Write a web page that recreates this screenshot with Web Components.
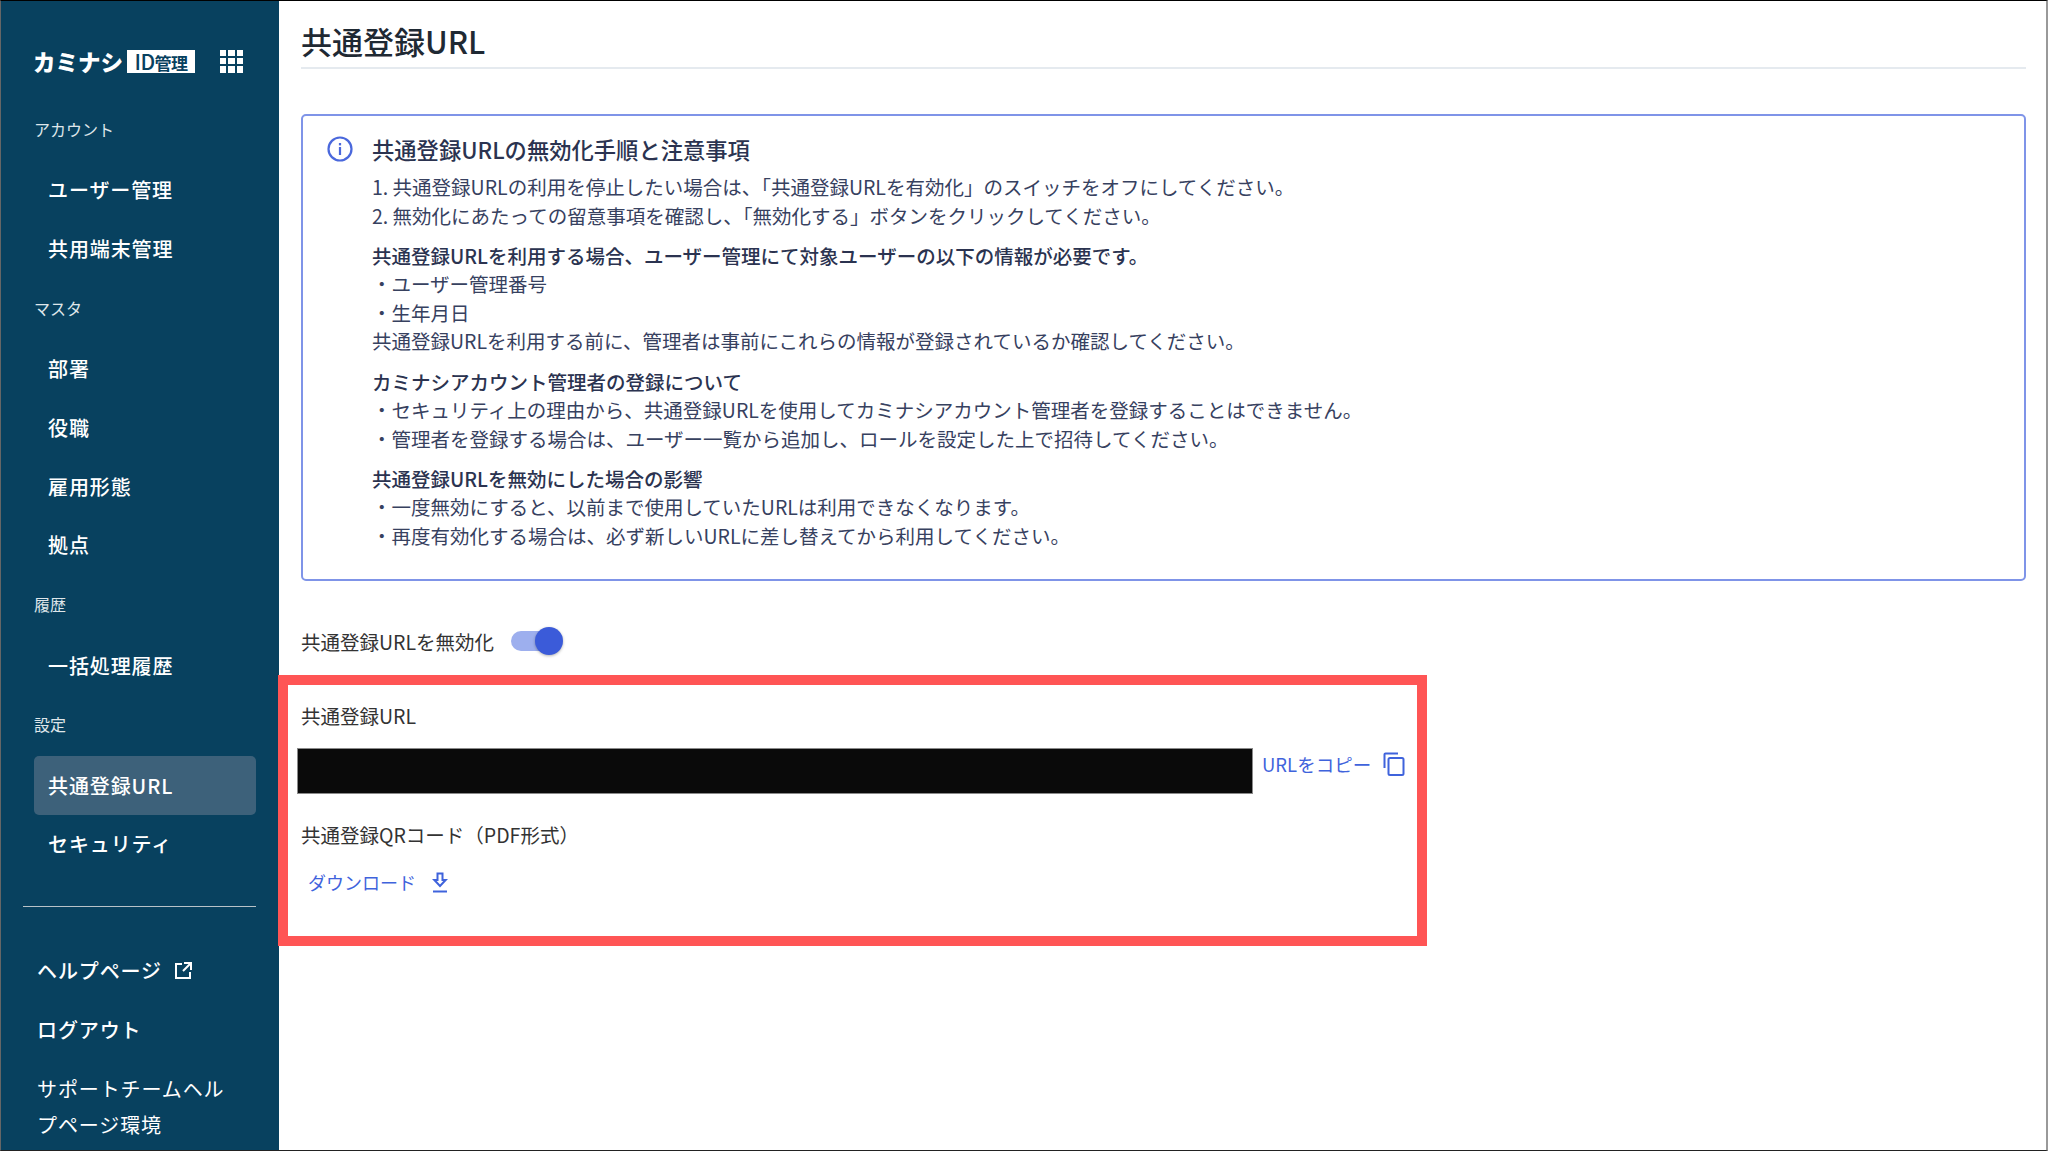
<!DOCTYPE html>
<html lang="ja">
<head>
<meta charset="utf-8">
<title>共通登録URL</title>
<style>
  html, body { margin: 0; padding: 0; }
  body {
    width: 2048px;
    height: 1151px;
    box-sizing: border-box;
    overflow: hidden;
    display: flex;
    background: #fff;
    border-top: 1px solid #000;
    border-bottom: 1px solid #222;
    border-left: 1px solid #666;
    border-right: 2px solid #999;
    font-family: "Noto Sans CJK JP", "Noto Sans", sans-serif;
  }
</style>
</head>
<body>
<side-nav>
  <nav-group label="アカウント">
    <nav-item>ユーザー管理</nav-item>
    <nav-item>共用端末管理</nav-item>
  </nav-group>
  <nav-group label="マスタ">
    <nav-item>部署</nav-item>
    <nav-item>役職</nav-item>
    <nav-item>雇用形態</nav-item>
    <nav-item>拠点</nav-item>
  </nav-group>
  <nav-group label="履歴">
    <nav-item>一括処理履歴</nav-item>
  </nav-group>
  <nav-group label="設定">
    <nav-item active>共通登録URL</nav-item>
    <nav-item>セキュリティ</nav-item>
  </nav-group>
  <side-link slot="footer" external>ヘルプページ</side-link>
  <side-link slot="footer">ログアウト</side-link>
  <side-link slot="footer" light>サポートチームヘルプページ環境</side-link>
</side-nav>
<main-area>
  <page-title>共通登録URL</page-title>
  <notice-box heading="共通登録URLの無効化手順と注意事項">
    <notice-block>
      <div>1. 共通登録URLの利用を停止したい場合は、「共通登録URLを有効化」のスイッチをオフにしてください。</div>
      <div>2. 無効化にあたっての留意事項を確認し、「無効化する」ボタンをクリックしてください。</div>
    </notice-block>
    <notice-block heading="共通登録URLを利用する場合、ユーザー管理にて対象ユーザーの以下の情報が必要です。">
      <div>・ユーザー管理番号</div>
      <div>・生年月日</div>
      <div>共通登録URLを利用する前に、管理者は事前にこれらの情報が登録されているか確認してください。</div>
    </notice-block>
    <notice-block heading="カミナシアカウント管理者の登録について">
      <div>・セキュリティ上の理由から、共通登録URLを使用してカミナシアカウント管理者を登録することはできません。</div>
      <div>・管理者を登録する場合は、ユーザー一覧から追加し、ロールを設定した上で招待してください。</div>
    </notice-block>
    <notice-block heading="共通登録URLを無効にした場合の影響">
      <div>・一度無効にすると、以前まで使用していたURLは利用できなくなります。</div>
      <div>・再度有効化する場合は、必ず新しいURLに差し替えてから利用してください。</div>
    </notice-block>
  </notice-box>
  <toggle-row>共通登録URLを無効化</toggle-row>
  <url-panel></url-panel>
</main-area>
<script>
class SideNav extends HTMLElement {
  constructor() {
    super();
    this.attachShadow({ mode: 'open' });
    this.shadowRoot.innerHTML = `<style>
  :host {
    display: flex;
    flex-direction: column;
    flex: none;
    width: 278px;
    height: 100%;
    background: #08415f;
    color: #fff;
    box-sizing: border-box;
    overflow: hidden;
  }
  .logo {
    display: flex;
    flex: none;
    align-items: center;
    height: 98px;
    padding: 22px 0 0 32px;
    box-sizing: border-box;
  }
  .logo__name {
    font-size: 22.5px;
    font-weight: 900;
    line-height: 24px;
  }
  .logo__badge {
    margin-left: 4px;
    width: 68px;
    height: 23px;
    background: #fff;
    color: #08415f;
    font-size: 17px;
    font-weight: 700;
    line-height: 23px;
    text-align: center;
    letter-spacing: -0.5px;
    white-space: nowrap;
  }
  .logo__badge b { font-size: 21px; font-weight: 500; }
  .logo__grid {
    margin-left: 25px;
    width: 23px;
    height: 23px;
    display: grid;
    grid-template-columns: repeat(3, 1fr);
    gap: 2px;
  }
  .logo__grid span { background: #fff; }
  .groups { display: flex; flex: none; flex-direction: column; }
  .rule {
    flex: none;
    margin: 33px 23px 0 22px;
    border-top: 1px solid #b8c2c8;
    height: 0;
  }
  .footer {
    display: flex;
    flex: none;
    flex-direction: column;
    padding-top: 35px;
  }
</style>
<div class="logo">
  <span class="logo__name">カミナシ</span>
  <span class="logo__badge"><b>ID</b>管理</span>
  <div class="logo__grid"><span></span><span></span><span></span><span></span><span></span><span></span><span></span><span></span><span></span></div>
</div>
<div class="groups"><slot></slot></div>
<div class="rule"></div>
<div class="footer"><slot name="footer"></slot></div>`;
  }
}

class NavGroup extends HTMLElement {
  constructor() {
    super();
    this.attachShadow({ mode: 'open' });
    this.shadowRoot.innerHTML = `<style>
  :host { display: block; }
  .label {
    height: 61.6px;
    box-sizing: border-box;
    padding: 0 0 2px 33px;
    display: flex;
    align-items: center;
    font-size: 16px;
    color: #dfe6ea;
  }
</style>
<div class="label"></div>
<slot></slot>`;
    this.shadowRoot.querySelector('.label').textContent = this.getAttribute('label');
  }
}

class NavItem extends HTMLElement {
  constructor() {
    super();
    this.attachShadow({ mode: 'open' });
    this.shadowRoot.innerHTML = `<style>
  :host {
    display: flex;
    align-items: center;
    height: 58.67px;
    margin: 0 23px 0 33px;
    padding-left: 14px;
    box-sizing: border-box;
    border-radius: 5px;
    font-size: 20px;
    font-weight: 500;
    letter-spacing: 0.9px;
    color: #fff;
  }
  :host([active]) { background: #3d617a; }
</style>
<slot></slot>`;
  }
}

class SideLink extends HTMLElement {
  constructor() {
    super();
    this.attachShadow({ mode: 'open' });
    const icon = this.hasAttribute('external')
      ? `<svg width="20" height="20" viewBox="0 0 20 20" fill="none" stroke="#fff" stroke-width="2"><path d="M9 3H3v14h14v-6"/><path d="M11 2h7v7M18 2l-8 8"/></svg>`
      : '';
    this.shadowRoot.innerHTML = `<style>
  :host {
    display: block;
    margin-left: 36px;
    width: 200px;
    font-size: 20px;
    font-weight: 500;
    letter-spacing: 0.9px;
    line-height: 36px;
    padding: 11px 0 12px;
    color: #fff;
  }
  :host([light]) { font-weight: 400; }
  svg { vertical-align: -2px; margin-left: 11px; }
</style>
<slot></slot>${icon}`;
  }
}

class MainArea extends HTMLElement {
  constructor() {
    super();
    this.attachShadow({ mode: 'open' });
    this.shadowRoot.innerHTML = `<style>
  :host {
    display: flex;
    flex-direction: column;
    flex: 1;
    min-width: 0;
    padding: 0 20px 0 22px;
    position: relative;
    color: #333;
  }
</style>
<slot></slot>`;
  }
}

class PageTitle extends HTMLElement {
  constructor() {
    super();
    this.attachShadow({ mode: 'open' });
    this.shadowRoot.innerHTML = `<style>
  :host {
    display: block;
    height: 68px;
    box-sizing: border-box;
    border-bottom: 2px solid #e5eaef;
    font-size: 31px;
    font-weight: 500;
    line-height: 80px;
    color: #1f2933;
  }
</style>
<slot></slot>`;
  }
}

class NoticeBox extends HTMLElement {
  constructor() {
    super();
    this.attachShadow({ mode: 'open' });
    this.shadowRoot.innerHTML = `<style>
  :host {
    display: block;
    margin-top: 45px;
    height: 467px;
    box-sizing: border-box;
    border: 2px solid #7f94e8;
    border-radius: 5px;
    padding: 18px 24px 0 24px;
    color: #37415f;
  }
  .head {
    display: flex;
    align-items: center;
    gap: 19px;
    height: 30px;
    font-size: 22.3px;
    font-weight: 500;
    color: #2b3350;
  }
  .head svg { flex: none; }
  .body { padding: 9.4px 0 0 45px; }
</style>
<div class="head">
  <svg width="26" height="26" viewBox="0 0 26 26" fill="none"><circle cx="13" cy="13" r="11.5" stroke="#4a68dc" stroke-width="2.2"/><rect x="11.9" y="11" width="2.2" height="8" fill="#4a68dc"/><rect x="11.9" y="7" width="2.2" height="2.4" fill="#4a68dc"/></svg>
  <span class="head__text"></span>
</div>
<div class="body"><slot></slot></div>`;
    this.shadowRoot.querySelector('.head__text').textContent = this.getAttribute('heading');
  }
}

class NoticeBlock extends HTMLElement {
  constructor() {
    super();
    this.attachShadow({ mode: 'open' });
    this.shadowRoot.innerHTML = `<style>
  :host {
    display: block;
    font-size: 19.5px;
    line-height: 28.5px;
    margin-bottom: 11.6px;
  }
  .heading { font-weight: 500; color: #2b3350; }
  .heading:empty { display: none; }
</style>
<div class="heading"></div>
<slot></slot>`;
    this.shadowRoot.querySelector('.heading').textContent = this.getAttribute('heading') || '';
  }
}

class ToggleRow extends HTMLElement {
  constructor() {
    super();
    this.attachShadow({ mode: 'open' });
    this.shadowRoot.innerHTML = `<style>
  :host {
    display: flex;
    align-items: center;
    margin-top: 45px;
    height: 30px;
    font-size: 19.5px;
    color: #333;
  }
  .switch {
    position: relative;
    margin-left: 17px;
    width: 50px;
    height: 20px;
    border-radius: 10px;
    background: #9dafee;
  }
  .switch::after {
    content: "";
    position: absolute;
    right: -2px;
    top: -4px;
    width: 28px;
    height: 28px;
    border-radius: 50%;
    background: #3b5bd9;
    box-shadow: 0 1px 3px rgba(0,0,0,.3);
  }
</style>
<slot></slot><div class="switch"></div>`;
  }
}

class UrlPanel extends HTMLElement {
  constructor() {
    super();
    this.attachShadow({ mode: 'open' });
    this.shadowRoot.innerHTML = `<style>
  :host {
    display: block;
    position: relative;
    font-size: 19.5px;
    color: #333;
  }
  .highlight {
    position: absolute;
    left: -23px;
    top: 19px;
    width: 1149px;
    height: 271px;
    box-sizing: border-box;
    border: 10px solid #ff5555;
    pointer-events: none;
  }
  .label { height: 28px; line-height: 28px; }
  .label--url { margin-top: 46px; }
  .row {
    display: flex;
    align-items: center;
    margin: 18px 0 0 -4px;
  }
  .secret {
    width: 956px;
    height: 46px;
    box-sizing: border-box;
    background: #0a0a0a;
    border: 1px solid #8a8a8a;
    flex: none;
  }
  a {
    color: #3f63dc;
    font-size: 18.5px;
    text-decoration: none;
    display: inline-flex;
    align-items: center;
  }
  .copy { margin-left: 9px; padding-bottom: 14px; }
  .copy svg { margin-left: 12px; }
  .label--qr { margin-top: 27px; }
  .download { margin: 20px 0 0 7px; font-size: 18px; }
  .download svg { margin-left: 16px; }
</style>
<div class="highlight"></div>
<div class="label label--url">共通登録URL</div>
<div class="row">
  <div class="secret"></div>
  <a class="copy" href="#">URLをコピー<svg width="22" height="24" viewBox="0 0 22 24" fill="none" stroke="#3f63dc" stroke-width="2"><path d="M1.5 16V2.5a1 1 0 0 1 1-1H15"/><rect x="5.5" y="6" width="15" height="17" rx="1.5"/></svg></a>
</div>
<div class="label label--qr">共通登録QRコード（PDF形式）</div>
<a class="download" href="#">ダウンロード<svg width="16" height="21" viewBox="0 0 16 21" fill="none" stroke="#3f63dc" stroke-width="2"><path d="M5.5 1.5h5V8h3.2L8 14 2.3 8h3.2z"/><path d="M1 19.5h14"/></svg></a>`;
  }
}

customElements.define('side-nav', SideNav);
customElements.define('nav-group', NavGroup);
customElements.define('nav-item', NavItem);
customElements.define('side-link', SideLink);
customElements.define('main-area', MainArea);
customElements.define('page-title', PageTitle);
customElements.define('notice-box', NoticeBox);
customElements.define('notice-block', NoticeBlock);
customElements.define('toggle-row', ToggleRow);
customElements.define('url-panel', UrlPanel);
</script>
</body>
</html>
